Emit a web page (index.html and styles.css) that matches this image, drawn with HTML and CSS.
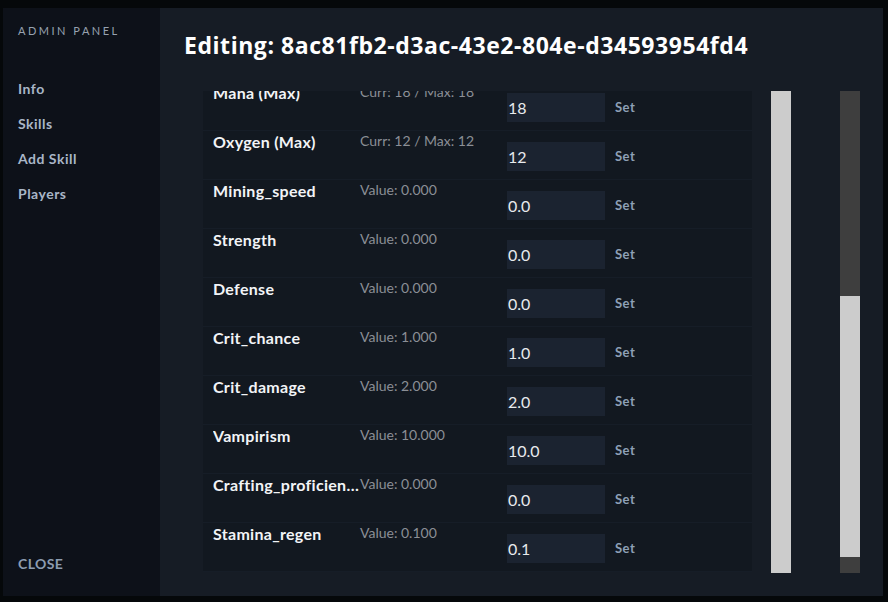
FILE: index.html
```html
<!DOCTYPE html>
<html lang="en">
<head>
<meta charset="utf-8">
<title>Admin Panel</title>
<link rel="stylesheet" href="styles.css">
</head>
<body>
<div class="app">
  <aside class="sidebar">
    <div class="brand">ADMIN PANEL</div>
    <nav class="nav">
      <a class="nav-item">Info</a>
      <a class="nav-item">Skills</a>
      <a class="nav-item">Add Skill</a>
      <a class="nav-item">Players</a>
    </nav>
    <a class="close">CLOSE</a>
  </aside>
  <main class="panel">
    <h1 class="title">Editing: 8ac81fb2-d3ac-43e2-804e-d34593954fd4</h1>
    <div class="content">
      <div class="list">
        <div class="rows">
          <div class="row"><div class="name">Mana (Max)</div><div class="value">Curr: 18 / Max: 18</div><input class="field" type="text" value="18"><button class="set">Set</button></div>
          <div class="row"><div class="name">Oxygen (Max)</div><div class="value">Curr: 12 / Max: 12</div><input class="field" type="text" value="12"><button class="set">Set</button></div>
          <div class="row"><div class="name">Mining_speed</div><div class="value">Value: 0.000</div><input class="field" type="text" value="0.0"><button class="set">Set</button></div>
          <div class="row"><div class="name">Strength</div><div class="value">Value: 0.000</div><input class="field" type="text" value="0.0"><button class="set">Set</button></div>
          <div class="row"><div class="name">Defense</div><div class="value">Value: 0.000</div><input class="field" type="text" value="0.0"><button class="set">Set</button></div>
          <div class="row"><div class="name">Crit_chance</div><div class="value">Value: 1.000</div><input class="field" type="text" value="1.0"><button class="set">Set</button></div>
          <div class="row"><div class="name">Crit_damage</div><div class="value">Value: 2.000</div><input class="field" type="text" value="2.0"><button class="set">Set</button></div>
          <div class="row"><div class="name">Vampirism</div><div class="value">Value: 10.000</div><input class="field" type="text" value="10.0"><button class="set">Set</button></div>
          <div class="row"><div class="name">Crafting_proficiency</div><div class="value">Value: 0.000</div><input class="field" type="text" value="0.0"><button class="set">Set</button></div>
          <div class="row"><div class="name">Stamina_regen</div><div class="value">Value: 0.100</div><input class="field" type="text" value="0.1"><button class="set">Set</button></div>
        </div>
      </div>
      <div class="bar bar-full"></div>
      <div class="bar bar-split">
        <div class="seg-dark top"></div>
        <div class="seg-light"></div>
        <div class="seg-dark bottom"></div>
      </div>
    </div>
  </main>
</div>
</body>
</html>
```

FILE: styles.css
```css
* { box-sizing: border-box; }
html, body {
  margin: 0;
  padding: 0;
  height: 100%;
}
body {
  background: #05080a;
  font-family: Lato, "Noto Sans", sans-serif;
  overflow: hidden;
}
.app {
  display: flex;
  height: 588px;
  margin: 8px 5px 6px 3px;
}
.sidebar {
  width: 157px;
  background: #0d1119;
  display: flex;
  flex-direction: column;
  padding: 16px 0 24px 15px;
}
.brand {
  font-size: 11px;
  line-height: 14px;
  letter-spacing: 2.5px;
  color: #97a2b0;
}
.nav {
  display: flex;
  flex-direction: column;
  margin-top: 33px;
}
.nav-item {
  font-size: 14px;
  font-weight: 700;
  line-height: 35px;
  letter-spacing: 0.5px;
  color: #a9b6c7;
}
.close {
  margin-top: auto;
  font-size: 14px;
  font-weight: 700;
  line-height: 17px;
  letter-spacing: 0.4px;
  color: #8c9cb0;
}
.panel {
  flex: 1;
  background: #161c25;
  padding: 26px 23px 23px 24px;
  display: flex;
  flex-direction: column;
}
.title {
  margin: 0;
  font-family: "Open Sans", sans-serif;
  font-size: 23px;
  line-height: 22px;
  font-weight: 700;
  color: #ffffff;
  letter-spacing: 0.55px;
  white-space: nowrap;
}
.content {
  margin-top: 35px;
  flex: 1;
  display: flex;
  padding-left: 19px;
  min-height: 0;
}
.list {
  width: 549px;
  height: 482px;
  overflow: hidden;
}
.rows {
  margin-top: -9px;
}
.row {
  display: flex;
  align-items: flex-start;
  height: 49px;
  background: #121820;
  border-bottom: 1px solid #161d27;
  padding-left: 10px;
}
.name {
  width: 147px;
  margin-top: 2px;
  font-size: 16px;
  line-height: 18px;
  font-weight: 700;
  letter-spacing: 0.3px;
  color: #f2f4f7;
  white-space: nowrap;
  overflow: hidden;
  text-overflow: ellipsis;
}
.value {
  width: 147px;
  margin-top: 2px;
  font-size: 14px;
  line-height: 16px;
  color: #8b8f96;
  white-space: nowrap;
}
.field {
  width: 98px;
  height: 29px;
  margin-top: 11px;
  border: none;
  outline: none;
  background: #1b2330;
  color: #e8eaed;
  font-family: Lato, "Noto Sans", sans-serif;
  font-size: 16px;
  padding: 0 0 0 1px;
}
.set {
  margin: 10px 0 0 10px;
  height: 29px;
  padding: 0;
  border: none;
  background: transparent;
  font-family: Lato, "Noto Sans", sans-serif;
  font-size: 13px;
  font-weight: 700;
  letter-spacing: 0.5px;
  color: #8ea0b6;
}
.bar {
  width: 20px;
  height: 482px;
}
.bar-full {
  margin-left: 19px;
  background: #cccccc;
}
.bar-split {
  margin-left: 49px;
  display: flex;
  flex-direction: column;
}
.seg-dark { background: #3e3e3e; }
.seg-dark.top { height: 205px; }
.seg-light { background: #cccccc; height: 261px; }
.seg-dark.bottom { flex: 1; }
```
